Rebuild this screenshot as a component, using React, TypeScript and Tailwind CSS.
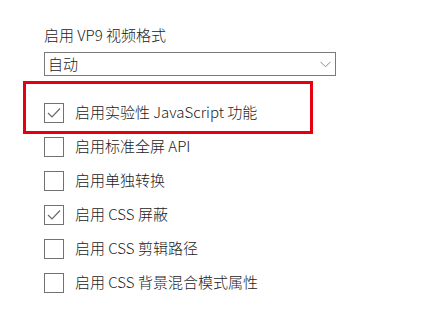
import React from "react";

const rows: { label: string; checked: boolean }[] = [
  { label: "启用实验性 JavaScript 功能", checked: true },
  { label: "启用标准全屏 API", checked: false },
  { label: "启用单独转换", checked: false },
  { label: "启用 CSS 屏蔽", checked: true },
  { label: "启用 CSS 剪辑路径", checked: false },
  { label: "启用 CSS 背景混合模式属性", checked: false },
];

function Box({ checked }: { checked: boolean }) {
  return (
    <div className="w-[20px] h-[20px] border-[1.5px] border-[#727272] bg-white shrink-0 flex items-center justify-center">
      {checked && (
        <svg width="20" height="20" viewBox="0 0 20 20" className="-m-[1.5px]">
          <polyline points="4,10 8,14 16,5.5" fill="none" stroke="#6a6a6a" strokeWidth="1.2" />
        </svg>
      )}
    </div>
  );
}

export default function App() {
  return (
    <div
      className="relative w-[443px] h-[316px] bg-white text-[#1b1b1b] font-light pl-[44px] pt-[25px]"
      style={{ fontFamily: '"Noto Sans CJK SC", "Noto Sans", sans-serif' }}
    >
      <div className="text-[15px] leading-[20px] h-[20px]">启用 VP9 视频格式</div>
      <div className="mt-[7px] w-[292px] h-[24px] border border-[#7a7a7a] flex items-center justify-between pl-[3px] pr-[4px]">
        <span className="text-[15px] leading-[20px]">自动</span>
        <svg width="11" height="7" viewBox="0 0 11 7">
          <polyline points="0.5,0.8 5.5,5.8 10.5,0.8" fill="none" stroke="#8a8a8a" strokeWidth="1" />
        </svg>
      </div>
      <div className="mt-[20px] flex flex-col">
        {rows.map((r) => (
          <div key={r.label} className="h-[34px] flex items-center gap-[11px]">
            <Box checked={r.checked} />
            <span className="text-[15px] leading-[20px] -mt-[3px]">{r.label}</span>
          </div>
        ))}
      </div>
      <div className="absolute left-[23px] top-[81px] w-[290px] h-[53px] border-[3px] border-[#e4000f] pointer-events-none" />
    </div>
  );
}
